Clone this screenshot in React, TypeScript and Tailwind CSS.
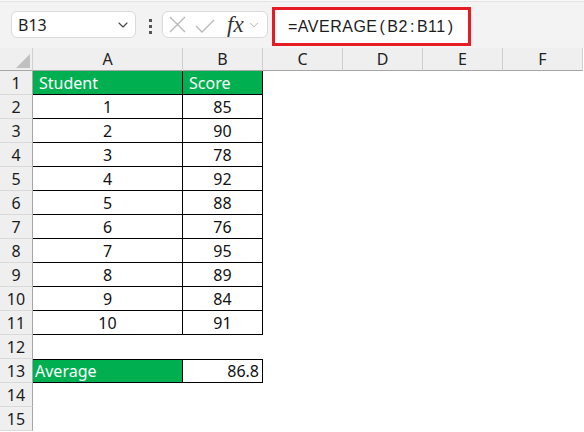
import { ChevronDown } from 'lucide-react'

const cols = ['A', 'B', 'C', 'D', 'E', 'F']
const scores = [85, 90, 78, 92, 88, 76, 95, 89, 84, 91]

function RowHead({ n }: { n: number }) {
  return (
    <div className="flex h-[24px] items-center justify-center border-b border-r border-b-[#d9d9d9] border-r-[#a6a6a6] bg-[#efefef] text-[16px] text-[#1b1b1b]">
      {n}
    </div>
  )
}

export default function App() {
  const rows: React.ReactNode[] = []
  for (let r = 1; r <= 15; r++) {
    let a: React.ReactNode = <div className="h-[24px]" />
    let b: React.ReactNode = <div className="h-[24px]" />
    if (r === 1) {
      a = <div className="flex h-[24px] items-center border-b border-r border-black bg-[#00b050] pl-[6px] text-white">Student</div>
      b = <div className="flex h-[24px] items-center border-b border-r border-black bg-[#00b050] pl-[6px] text-white">Score</div>
    } else if (r <= 11) {
      a = <div className="flex h-[24px] items-center justify-center border-b border-r border-black">{r - 1}</div>
      b = <div className="flex h-[24px] items-center justify-center border-b border-r border-black">{scores[r - 2]}</div>
    } else if (r === 13) {
      a = <div className="flex h-[24px] items-center border-y border-r border-black bg-[#00b050] pl-[2px] text-white">Average</div>
      b = <div className="flex h-[24px] items-center justify-end border-y border-r border-black pr-[3px]">86.8</div>
    }
    rows.push(
      <div key={r} className="contents">
        <RowHead n={r} />
        {a}
        {b}
        <div />
        <div />
        <div />
        <div />
      </div>
    )
  }

  return (
    <div className="h-[432px] w-[584px] overflow-hidden bg-white text-[16px] text-[#111]" style={{ fontFamily: '"Noto Sans", "Liberation Sans", sans-serif' }}>
      <div className="h-[2px] border-b border-[#e4e4e4] bg-[#fafafa]" />
      <div className="flex h-[46px] items-start bg-[#f3f3f3] pl-[11px]">
        <div className="mt-[9px] flex h-[27px] w-[125px] items-center justify-between rounded-[6px] border border-[#dadada] bg-white pl-[6px] pr-[4px]">
          <span className="text-[16px] text-[#1d1d1d]">B13</span>
          <ChevronDown size={16} strokeWidth={1.6} className="text-[#444]" />
        </div>
        <div className="mt-[17px] ml-[12px] flex w-[4px] flex-col items-center gap-[3px]">
          <span className="h-[3px] w-[3px] bg-[#555]" />
          <span className="h-[3px] w-[3px] bg-[#555]" />
          <span className="h-[3px] w-[3px] bg-[#555]" />
        </div>
        <div className="ml-[10px] mt-[9px] flex h-[27px] w-[106px] items-center rounded-[6px] border border-[#dadada] bg-white pl-[6px]">
          <svg width="17" height="17" viewBox="0 0 17 17" className="text-[#b8b8b8]">
            <path d="M1 1 L16 16 M16 1 L1 16" stroke="currentColor" strokeWidth="1.3" fill="none" />
          </svg>
          <svg width="20" height="14" viewBox="0 0 20 14" className="ml-[9px] mt-[2px] text-[#b8b8b8]">
            <path d="M1 7 L7 13 L19 1" stroke="currentColor" strokeWidth="1.3" fill="none" />
          </svg>
          <span className="ml-[12px] text-[23px] italic leading-none text-[#333]" style={{ fontFamily: '"Liberation Serif", serif' }}>fx</span>
          <ChevronDown size={14} strokeWidth={1.3} className="ml-[3px] text-[#9a9a9a]" />
        </div>
        <div className="ml-[4px] mt-[5px] flex h-[39px] w-[199px] items-center border-[3px] border-[#e51c23] bg-white pl-[13px] text-[16px] tracking-[0.5px] text-[#1d1d1d]" style={{ fontFamily: '"Liberation Sans", sans-serif' }}>
          <span>=AVERAGE</span>
          <span className="mx-[2px]">(</span>
          <span>B2</span>
          <span className="mx-[2px]">:</span>
          <span>B11</span>
          <span className="ml-[2px]">)</span>
        </div>
      </div>
      <div className="grid grid-cols-[33px_150px_80px_80px_80px_80px_80px]">
        <div className="relative h-[23px] border-b border-r border-b-[#a6a6a6] border-r-[#d0d0d0] bg-[#efefef]">
          <div className="absolute bottom-[2px] right-[2px] h-0 w-0 border-b-[14px] border-l-[14px] border-b-[#c0c0c0] border-l-transparent" />
        </div>
        {cols.map((c) => (
          <div key={c} className="flex h-[23px] items-center justify-center border-b border-r border-b-[#a6a6a6] border-r-[#d0d0d0] bg-[#efefef] text-[16px] text-[#222]">
            {c}
          </div>
        ))}
        {rows}
      </div>
    </div>
  )
}
